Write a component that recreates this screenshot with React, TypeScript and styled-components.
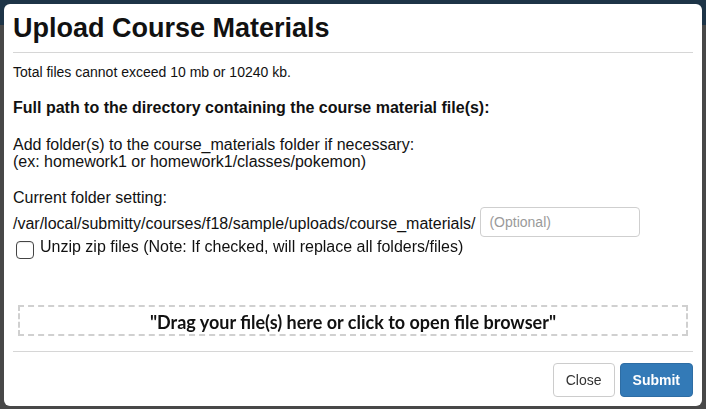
import styled, { createGlobalStyle } from "styled-components";

const Global = createGlobalStyle`
  html, body {
    margin: 0;
    padding: 0;
    height: 100%;
  }
  body {
    font-family: "Liberation Sans", Arial, sans-serif;
    background: #484848;
    overflow: hidden;
  }
`;

const Page = styled.div`
  height: 409px;
  display: flex;
  flex-direction: column;
`;

const TopBar = styled.div`
  height: 25px;
  background: #1d3447;
`;

const Backdrop = styled.div`
  flex: 1;
  background: #484848;
`;

const Modal = styled.div`
  position: fixed;
  left: 4px;
  top: 4px;
  width: 698px;
  height: 402px;
  background: #fff;
  border-radius: 6px;
  display: flex;
  flex-direction: column;
  padding: 0 9px;
  box-sizing: border-box;
  color: #111;
`;

const Header = styled.div`
  padding: 8px 0 8px;
  border-bottom: 1px solid #d6d6d6;
`;

const Title = styled.h2`
  margin: 0;
  font-size: 27px;
  line-height: 32px;
  font-weight: 700;
`;

const Body = styled.div`
  display: flex;
  flex-direction: column;
  font-size: 16px;
  line-height: 17px;
  flex: 1;
`;

const Note = styled.p`
  margin: 11px 0 0;
  font-size: 14px;
  line-height: 16px;
`;

const Para = styled.p<{ $top: number; $bold?: boolean }>`
  margin: ${(p) => p.$top}px 0 0;
  font-weight: ${(p) => (p.$bold ? 700 : 400)};
`;

const PathRow = styled.div`
  margin-top: 1px;
  display: flex;
  align-items: center;
  gap: 5px;
`;

const PathText = styled.span`
  padding-top: 3px;
`;

const FolderInput = styled.input`
  width: 160px;
  height: 30px;
  box-sizing: border-box;
  border: 1px solid #cfcfcf;
  border-radius: 4px;
  padding: 0 8px;
  font-family: "Liberation Sans", Arial, sans-serif;
  font-size: 14px;
  outline: none;
  &::placeholder {
    color: #9a9a9a;
  }
`;

const CheckRow = styled.label`
  margin-top: 1px;
  display: flex;
  align-items: flex-start;
  gap: 6px;
  padding-left: 3px;
`;

const Box = styled.span`
  margin-top: 3px;
  width: 18px;
  height: 18px;
  border: 1px solid #444;
  border-radius: 4px;
  box-sizing: border-box;
  background: #fff;
  box-shadow: inset 0 1px 1px rgba(0, 0, 0, 0.08);
`;

const DropZone = styled.div`
  margin: 46px 5px 0;
  height: 31px;
  border: 2px dashed #d0d0d0;
  box-sizing: border-box;
  display: flex;
  align-items: center;
  justify-content: center;
  font-family: Lato, "Open Sans", sans-serif;
  font-weight: 700;
  font-size: 18px;
  padding-top: 4px;
`;

const Footer = styled.div`
  margin-top: 15px;
  border-top: 1px solid #d6d6d6;
  padding: 11px 0 9px;
  display: flex;
  justify-content: flex-end;
  gap: 5px;
`;

const Button = styled.button<{ $primary?: boolean }>`
  height: 34px;
  padding: 0 12px;
  border-radius: 4px;
  font-family: "Liberation Sans", Arial, sans-serif;
  font-size: 14px;
  border: 1px solid ${(p) => (p.$primary ? "#2e6da4" : "#cccccc")};
  background: ${(p) => (p.$primary ? "#337ab7" : "#fff")};
  color: ${(p) => (p.$primary ? "#fff" : "#333")};
  font-weight: ${(p) => (p.$primary ? 700 : 400)};
`;

export default function App() {
  return (
    <>
      <Global />
      <Page>
        <TopBar />
        <Backdrop />
      </Page>
      <Modal>
        <Header>
          <Title>Upload Course Materials</Title>
        </Header>
        <Body>
          <Note>Total files cannot exceed 10 mb or 10240 kb.</Note>
          <Para $top={19} $bold>
            Full path to the directory containing the course material file(s):
          </Para>
          <Para $top={20}>
            Add folder(s) to the course_materials folder if necessary:
            <br />
            (ex: homework1 or homework1/classes/pokemon)
          </Para>
          <Para $top={19}>Current folder setting:</Para>
          <PathRow>
            <PathText>/var/local/submitty/courses/f18/sample/uploads/course_materials/</PathText>
            <FolderInput placeholder="(Optional)" />
          </PathRow>
          <CheckRow>
            <Box />
            <span>Unzip zip files (Note: If checked, will replace all folders/files)</span>
          </CheckRow>
          <DropZone>"Drag your file(s) here or click to open file browser"</DropZone>
        </Body>
        <Footer>
          <Button>Close</Button>
          <Button $primary>Submit</Button>
        </Footer>
      </Modal>
    </>
  );
}
